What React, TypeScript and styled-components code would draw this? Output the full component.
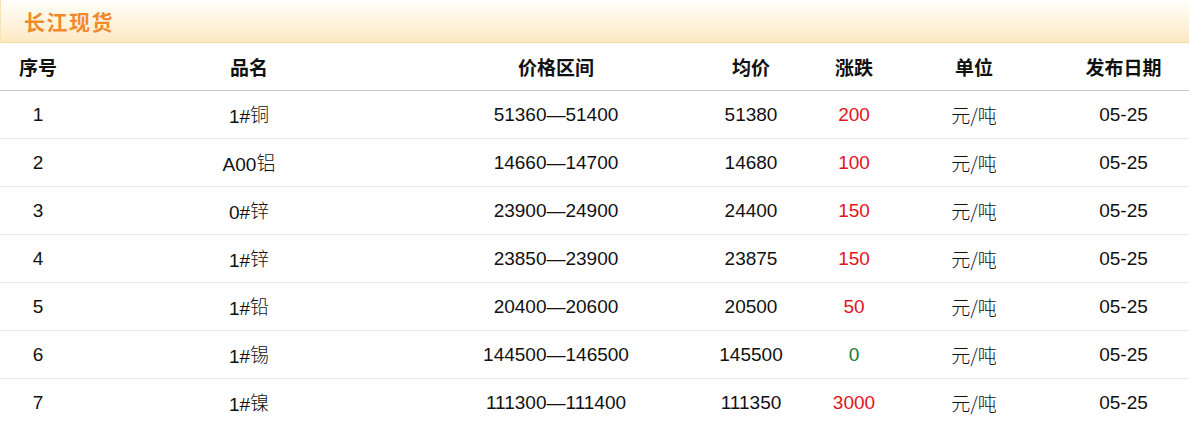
import React from 'react';
import styled, { createGlobalStyle } from 'styled-components';

const GlobalStyle = createGlobalStyle`
  html, body {
    margin: 0;
    padding: 0;
    background: #fff;
  }
  body {
    font-family: "Liberation Sans", Arial, "Noto Sans CJK SC", sans-serif;
  }
`;

const Panel = styled.div`
  width: 1189px;
  background: #fff;
`;

const TitleBar = styled.div`
  height: 42px;
  display: flex;
  align-items: center;
  padding-left: 23px;
  background: linear-gradient(to bottom, #fffefb 0%, #fef4de 55%, #fde8c2 100%);
  border-bottom: 1px solid #f2dc97;
  border-left: 1px solid #f7e3b4;
`;

const Title = styled.h2`
  margin: 0;
  font-family: "Noto Sans CJK SC", sans-serif;
  font-size: 21px;
  font-weight: 700;
  color: #f08a2c;
  letter-spacing: 1.5px;
`;

const Table = styled.table`
  width: 1189px;
  border-collapse: collapse;
  table-layout: fixed;
`;

const HeadCell = styled.th<{ $w: number; $inset?: number }>`
  width: ${(p) => p.$w}px;
  height: 47px;
  padding: 0 0 0 ${(p) => p.$inset ?? 0}px;
  text-align: center;
  font-family: "Noto Sans CJK SC", sans-serif;
  font-size: 19px;
  font-weight: 700;
  color: #111;
  border-bottom: 1px solid #c8c8c8;
`;

const Row = styled.tr`
  & + & td {
    border-top: 1px solid #ececec;
  }
`;

const Cell = styled.td<{ $tone?: 'up' | 'flat' | 'cjk'; $inset?: number }>`
  height: 47px;
  padding: 0 0 0 ${(p) => p.$inset ?? 0}px;
  text-align: center;
  font-size: 19px;
  color: ${(p) => (p.$tone === 'up' ? '#e2141c' : p.$tone === 'flat' ? '#167a37' : '#111')};
  font-family: ${(p) =>
    p.$tone === 'cjk'
      ? '"Noto Sans CJK SC", sans-serif'
      : '"Liberation Sans", Arial, "Noto Sans CJK SC", sans-serif'};
  font-weight: ${(p) => (p.$tone === 'cjk' ? 300 : 400)};
`;

const Name = styled.span`
  & > em {
    font-style: normal;
    font-family: "Noto Sans CJK SC", sans-serif;
    font-weight: 300;
    position: relative;
    top: -1px;
  }
`;

const DATE_INSET = 3;

const columns = [
  { label: '序号', w: 76, inset: 0 },
  { label: '品名', w: 346, inset: 0 },
  { label: '价格区间', w: 268, inset: 0 },
  { label: '均价', w: 122, inset: 0 },
  { label: '涨跌', w: 84, inset: 0 },
  { label: '单位', w: 156, inset: 0 },
  { label: '发布日期', w: 137, inset: DATE_INSET },
];

const rows = [
  { code: '1#', metal: '铜', range: '51360—51400', avg: '51380', change: 200 },
  { code: 'A00', metal: '铝', range: '14660—14700', avg: '14680', change: 100 },
  { code: '0#', metal: '锌', range: '23900—24900', avg: '24400', change: 150 },
  { code: '1#', metal: '锌', range: '23850—23900', avg: '23875', change: 150 },
  { code: '1#', metal: '铅', range: '20400—20600', avg: '20500', change: 50 },
  { code: '1#', metal: '锡', range: '144500—146500', avg: '145500', change: 0 },
  { code: '1#', metal: '镍', range: '111300—111400', avg: '111350', change: 3000 },
];

export default function App() {
  return (
    <Panel>
      <GlobalStyle />
      <TitleBar>
        <Title>长江现货</Title>
      </TitleBar>
      <Table>
        <thead>
          <tr>
            {columns.map((c) => (
              <HeadCell key={c.label} $w={c.w} $inset={c.inset}>
                {c.label}
              </HeadCell>
            ))}
          </tr>
        </thead>
        <tbody>
          {rows.map((r, i) => (
            <Row key={i}>
              <Cell>{i + 1}</Cell>
              <Cell>
                <Name>
                  {r.code}
                  <em>{r.metal}</em>
                </Name>
              </Cell>
              <Cell>{r.range}</Cell>
              <Cell>{r.avg}</Cell>
              <Cell $tone={r.change > 0 ? 'up' : 'flat'}>{r.change}</Cell>
              <Cell $tone="cjk">元/吨</Cell>
              <Cell $inset={DATE_INSET}>05-25</Cell>
            </Row>
          ))}
        </tbody>
      </Table>
    </Panel>
  );
}
